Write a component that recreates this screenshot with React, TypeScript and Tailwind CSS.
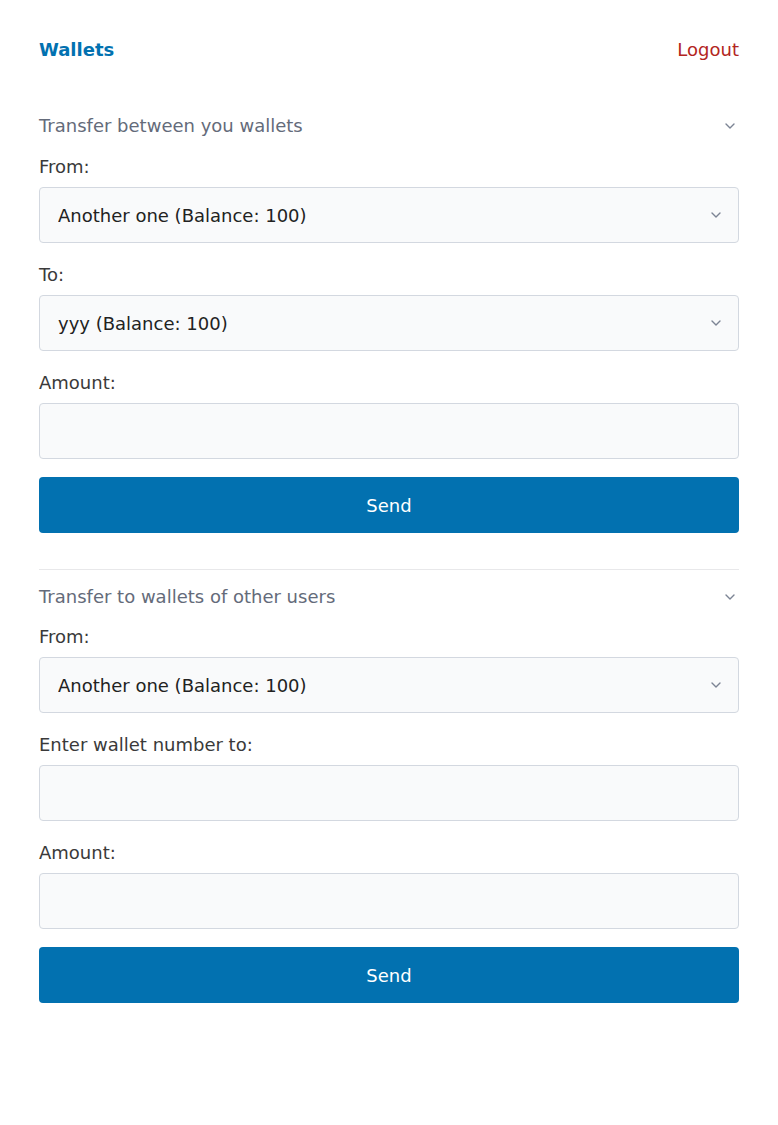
import React, { useState } from 'react';

const Chevron = ({ className }: { className?: string }) => (
    <svg className={className} width="10" height="6" viewBox="0 0 10 6" fill="none" stroke="currentColor" strokeWidth={1.4} strokeLinecap="round" strokeLinejoin="round">
        <path d="M1 1l4 4 4-4" />
    </svg>
);

interface Wallet {
    name: string;
    balance: number;
}

const wallets: Wallet[] = [
    { name: 'Another one', balance: 100 },
    { name: 'yyy', balance: 100 },
];

const Field: React.FC<{ label: string; className?: string; children: React.ReactNode }> = ({ label, className = 'mt-5', children }) => (
    <div className={className}>
        <label className="block leading-6 text-[#3a3a3a] mb-2">{label}</label>
        {children}
    </div>
);

const WalletSelect: React.FC<{ value: number; onChange: (v: number) => void }> = ({ value, onChange }) => (
    <div className="relative">
        <select
            value={value}
            onChange={(e) => onChange(Number(e.target.value))}
            className="w-full h-14 appearance-none rounded border border-[#d3d8e0] bg-[#f9fafb] pl-[18px] pr-10 text-[#222] outline-none"
        >
            {wallets.map((w, i) => (
                <option key={i} value={i}>{w.name} (Balance: {w.balance})</option>
            ))}
        </select>
        <Chevron className="absolute right-[18px] top-1/2 -translate-y-1/2 text-[#7c8494] pointer-events-none" />
    </div>
);

const TextInput = () => (
    <input
        type="text"
        className="block w-full h-14 rounded border border-[#d3d8e0] bg-[#f9fafb] px-[18px] text-[#222] outline-none"
    />
);

const SectionTitle: React.FC<{ title: string }> = ({ title }) => (
    <div className="flex items-center justify-between leading-6 text-[#646b7a]">
        <span>{title}</span>
        <Chevron className="mr-1 text-[#7c8494]" />
    </div>
);

const SendButton = () => (
    <button className="mt-[18px] block w-full h-14 rounded bg-[#0271b0] text-white">Send</button>
);

export default function App() {
    const [from1, setFrom1] = useState(0);
    const [to1, setTo1] = useState(1);
    const [from2, setFrom2] = useState(0);

    return (
        <div className="min-h-screen bg-white px-[39px] pt-[38px] text-[18px]" style={{ fontFamily: '"DejaVu Sans", sans-serif' }}>
            <header className="flex items-center justify-between leading-6">
                <a className="font-bold text-[#0271b0]">Wallets</a>
                <a className="text-[#b3261e]">Logout</a>
            </header>

            <section className="mt-[52px]">
                <SectionTitle title="Transfer between you wallets" />
                <Field label="From:" className="mt-[17px]">
                    <WalletSelect value={from1} onChange={setFrom1} />
                </Field>
                <Field label="To:">
                    <WalletSelect value={to1} onChange={setTo1} />
                </Field>
                <Field label="Amount:">
                    <TextInput />
                </Field>
                <SendButton />
            </section>

            <hr className="mt-9 border-t border-[#e8e8ea]" />

            <section className="mt-[15px]">
                <SectionTitle title="Transfer to wallets of other users" />
                <Field label="From:" className="mt-4">
                    <WalletSelect value={from2} onChange={setFrom2} />
                </Field>
                <Field label="Enter wallet number to:">
                    <TextInput />
                </Field>
                <Field label="Amount:">
                    <TextInput />
                </Field>
                <SendButton />
            </section>
        </div>
    );
}
